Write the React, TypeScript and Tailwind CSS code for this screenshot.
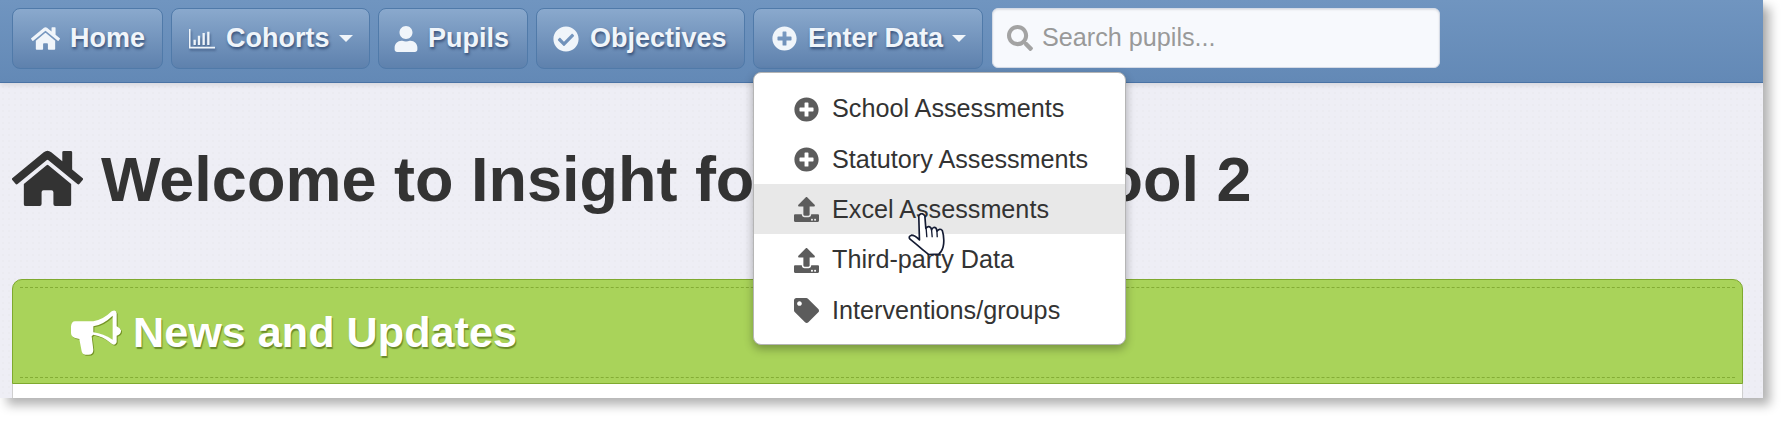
import { FaCheckCircle, FaHome, FaPlusCircle, FaSearch, FaTag, FaUpload, FaUser } from "react-icons/fa";

const navBtn =
  "flex h-[61px] shrink-0 items-center rounded-[8px] border border-[#507aa9] bg-gradient-to-b from-[#8aa9cd] to-[#5e81ad] text-[27px] font-bold text-[#f0f5fa] [text-shadow:1px_2px_3px_rgba(20,40,80,0.65)]";

function Caret() {
  return <span className="ml-[9px] h-0 w-0 border-x-[7px] border-t-[7px] border-x-transparent border-t-[#f0f5fa]" />;
}

function ChartIcon() {
  return (
    <svg width="26" height="20" viewBox="0 0 78 60" fill="none" stroke="#f0f5fa" className="drop-shadow-[1px_2px_1px_rgba(20,40,80,0.45)]">
      <path d="M2 0V56H78" strokeWidth="5" />
      <path d="M17 32V48M30 20V48M44 12V48M58 8V48" strokeWidth="7" />
    </svg>
  );
}

function MegaphoneIcon() {
  return (
    <svg width="50" height="45" viewBox="33 42 150 133" className="drop-shadow-[1px_1px_0_rgba(110,140,30,0.9)]">
      <path
        fill="#fff"
        fillRule="evenodd"
        d="M45 75L100 75Q130 70 155 45Q168 38 170 50L170 90Q185 98 183 105Q182 115 170 118L170 138Q165 150 155 142Q130 120 100 115L95 120L100 160Q100 175 85 175L75 175Q68 175 65 165L58 128L45 125Q33 120 33 110L33 90Q35 75 45 75ZM100 90L100 108Q130 112 158 130L158 58Q130 85 100 90Z"
      />
    </svg>
  );
}

function HandCursor() {
  return (
    <svg width="37" height="42" viewBox="0 0 110 125" className="absolute left-[908px] top-[213px]">
      <path
        fill="#fff"
        stroke="#141b33"
        strokeWidth="5"
        strokeLinejoin="round"
        d="M32 8Q40 -4 50 8L53 46Q60 36 68 44L70 50Q76 38 84 46L86 54Q94 44 102 52Q108 70 106 92Q104 112 92 122L62 124Q44 110 26 94L6 78Q0 70 10 66Q20 66 34 80Z"
      />
      <path fill="none" stroke="#141b33" strokeWidth="4" d="M54 46L56 72M70 50L72 72M86 54L87 72" />
    </svg>
  );
}

const menuItems = [
  { label: "School Assessments", icon: FaPlusCircle },
  { label: "Statutory Assessments", icon: FaPlusCircle },
  { label: "Excel Assessments", icon: FaUpload, active: true },
  { label: "Third-party Data", icon: FaUpload },
  { label: "Interventions/groups", icon: FaTag },
];

export default function App() {
  return (
    <div className="h-[423px] w-[1788px] overflow-hidden bg-white font-['Liberation_Sans',sans-serif]">
      <div className="relative h-[398px] w-[1763px] bg-[#eeeef5] bg-[radial-gradient(#ebebf1_1px,transparent_1px)] bg-[size:6px_6px] shadow-[7px_7px_10px_rgba(0,0,0,0.3)]">
        {/* Top bar */}
        <nav className="relative flex h-[83px] items-start gap-2 border-b border-[#4a73a5] bg-gradient-to-b from-[#7095c0] to-[#6389b6] pl-3 pt-[8px] shadow-[0_2px_5px_rgba(0,0,0,0.1)]">
          <button className={`${navBtn} w-[151px] pl-[18px]`}>
            <FaHome size={29} className="mr-[10px]" />
            Home
          </button>
          <button className={`${navBtn} w-[199px] pl-[17px]`}>
            <span className="mr-[11px]">
              <ChartIcon />
            </span>
            Cohorts
            <Caret />
          </button>
          <button className={`${navBtn} w-[150px] pl-[14px]`}>
            <FaUser size={26} className="mr-[9px]" />
            Pupils
          </button>
          <button className={`${navBtn} w-[209px] pl-[16px]`}>
            <FaCheckCircle size={26} className="mr-[11px]" />
            Objectives
          </button>
          <button className={`${navBtn} w-[230px] pl-[18px]`}>
            <FaPlusCircle size={25} className="mr-[11px]" />
            Enter Data
            <Caret />
          </button>
          <div className="ml-px flex h-[60px] w-[448px] items-center rounded-[6px] border border-[#d5dbe6] bg-[#f7f9fd] pl-[14px] shadow-[inset_0_1px_2px_rgba(0,0,0,0.1)]">
            <FaSearch size={26} className="mr-[9px] shrink-0 text-[#a3a3a3]" />
            <input
              placeholder="Search pupils..."
              className="w-full bg-transparent text-[25.2px] text-[#555] outline-none placeholder:text-[#999]"
            />
          </div>
        </nav>

        <main className="pl-3">
          <h1 className="flex h-[196px] items-start pt-[60px] text-[63px] font-bold leading-[72px] text-[#333]">
            <FaHome size={71} className="mr-[18px] shrink-0" />
            Welcome to Insight for Demo School 2
          </h1>

          <section className="h-[119px] w-[1731px] rounded-t-[10px] border-x border-[#cfcfcf] bg-white">
            <header className="-mx-px h-[105px] rounded-t-[10px] border border-[#7fa92f] bg-[#a9d35a] px-[7px] pt-[7px]">
              <div className="flex h-[91px] items-center border-y border-dashed border-[#84ad35] pl-[51px]">
                <MegaphoneIcon />
                <h2 className="ml-[12px] text-[43.2px] font-bold text-white [text-shadow:1px_2px_1px_rgba(90,120,30,0.8)]">
                  News and Updates
                </h2>
              </div>
            </header>
          </section>
        </main>

        {/* Open Enter Data menu */}
        <div className="absolute left-[753px] top-[72px] w-[373px] rounded-[8px] border border-[#b5b5b5] bg-white pb-[9px] pt-[10px] shadow-[0_4px_10px_rgba(0,0,0,0.3)]">
          {menuItems.map(({ label, icon: Icon, active }) => (
            <div
              key={label}
              className={`flex h-[50.4px] items-center pl-[40px] pt-[2px] text-[25.2px] text-[#333] ${active ? "bg-[#e8e8e8]" : ""}`}
            >
              <span className="mr-[13px] flex w-[25px] justify-center text-[#5c5c5c]">
                <Icon size={25} />
              </span>
              {label}
            </div>
          ))}
        </div>

        <HandCursor />
      </div>
    </div>
  );
}
